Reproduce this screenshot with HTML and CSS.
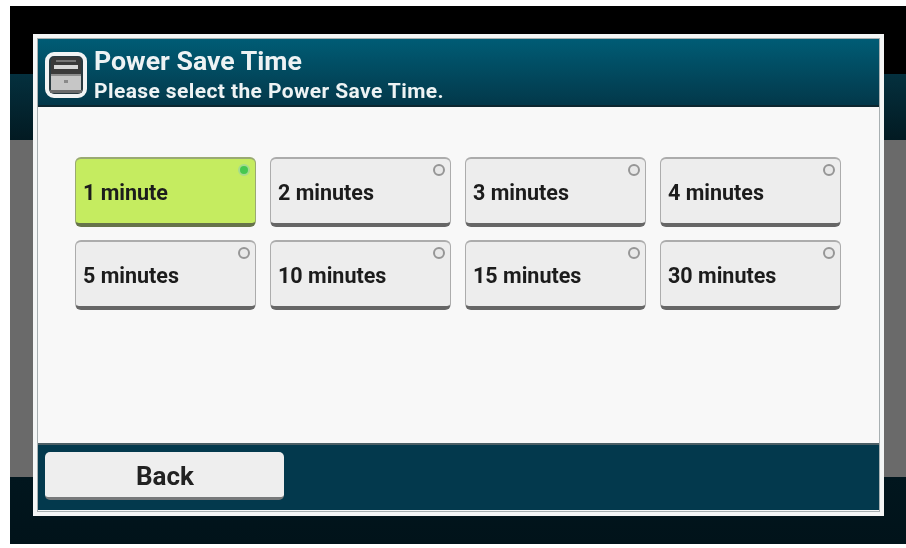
FILE: index.html
```html
<!DOCTYPE html>
<html lang="en">
<head>
    <meta charset="UTF-8">
    <title>Power Save Time</title>
    <link rel="stylesheet" href="styles.css">
</head>
<body>
    <div class="screen">
        <div class="dialog">
            <header class="titleBar">
                <svg class="printerIcon" viewBox="0 0 42 46" width="42" height="46">
                    <rect x="2" y="2" width="38" height="42" rx="7" fill="#2a3a40" stroke="#f2f4f4" stroke-width="4"/>
                    <path d="M6 9 Q6 5 10 5 H32 Q36 5 36 9 V22 H6 Z" fill="#3a3a3a"/>
                    <rect x="9" y="13" width="24" height="4" fill="#d8d8d8"/>
                    <rect x="11" y="8" width="20" height="2" fill="#777"/>
                    <rect x="6" y="22" width="30" height="16" fill="#c6c6c6"/>
                    <rect x="6" y="22" width="30" height="2" fill="#8c8c8c"/>
                    <rect x="19" y="28" width="4" height="3" fill="#8a8a8a"/>
                    <rect x="5" y="38" width="32" height="3" fill="#6b6b6b"/>
                </svg>
                <div class="titleText">
                    <h1>Power Save Time</h1>
                    <p>Please select the Power Save Time.</p>
                </div>
            </header>
            <main class="content">
                <div class="optionGrid">
                    <button class="option selected">1 minute</button>
                    <button class="option">2 minutes</button>
                    <button class="option">3 minutes</button>
                    <button class="option">4 minutes</button>
                    <button class="option">5 minutes</button>
                    <button class="option">10 minutes</button>
                    <button class="option">15 minutes</button>
                    <button class="option">30 minutes</button>
                </div>
            </main>
            <footer class="footerBar">
                <button class="backButton">Back</button>
            </footer>
        </div>
    </div>
</body>
</html>
```

FILE: styles.css
```css
html, body {
    margin: 0;
    padding: 0;
    background: #fff;
}
body {
    font-family: 'Roboto', 'Liberation Sans', sans-serif;
}
.screen {
    box-sizing: border-box;
    width: 896px;
    height: 538px;
    margin: 6px 0 0 10px;
    padding: 28px 0 0 23px;
    /* bands of the panel behind the dialog */
    background: linear-gradient(to bottom,
        #000 0, #000 68px,
        #04303e 68px, #021a22 134px,
        #6a6a6a 134px, #6a6a6a 471px,
        #01161e 471px, #01131a 538px);
    filter: blur(0.7px);
}
.dialog {
    box-sizing: border-box;
    width: 851px;
    height: 482px;
    border: solid #f4f6f6;
    border-width: 5px 5px 6px 5px;
    outline: 1px solid #a8b0b2;
    outline-offset: -5px;
    display: flex;
    flex-direction: column;
}
.titleBar {
    height: 68px;
    flex: none;
    box-sizing: border-box;
    padding: 0 0 0 7px;
    display: flex;
    align-items: center;
    gap: 7px;
    background: linear-gradient(to bottom, #005c75, #03384a);
    border-bottom: 2px solid #0d2730;
    color: #eef3f4;
}
.printerIcon {
    flex: none;
    margin-top: 5px;
}
.titleText {
    padding-top: 6px;
}
.titleText h1 {
    margin: 0;
    font-size: 26.7px;
    line-height: 29px;
    font-weight: 700;
}
.titleText p {
    margin: 3px 0 0;
    font-size: 21px;
    line-height: 24px;
    font-weight: 700;
    letter-spacing: 0.4px;
}
.content {
    flex: 1;
    background: #f8f8f8;
    padding: 50px 0 0 37px;
}
.optionGrid {
    display: grid;
    grid-template-columns: repeat(4, 181px);
    grid-auto-rows: 70px;
    column-gap: 14px;
    row-gap: 13px;
}
.option {
    position: relative;
    box-sizing: border-box;
    margin: 0;
    padding: 2px 0 0 7px;
    text-align: left;
    font-family: inherit;
    font-size: 21.5px;
    font-weight: 700;
    color: #1c1c1c;
    background: #ededed;
    border: solid #acacac;
    border-width: 2px 1px 4px;
    border-bottom-color: #666;
    border-radius: 6px;
}
.option::after {
    content: '';
    position: absolute;
    top: 5px;
    right: 5px;
    width: 8px;
    height: 8px;
    border: 2px solid #969696;
    border-radius: 50%;
    background: #e8e8e8;
}
.option.selected {
    background: #c5ec60;
    border-color: #9aaa72 #9aaa72 #66734a;
}
.option.selected::after {
    border-color: #a5dc8c;
    background: #45c850;
}
.footerBar {
    height: 67px;
    flex: none;
    box-sizing: border-box;
    padding: 7px 0 0 7px;
    background: #03394d;
    border-top: 2px solid #4c5f66;
}
.backButton {
    box-sizing: border-box;
    width: 239px;
    height: 48px;
    margin: 0;
    padding: 2px 0 0 1px;
    font-family: inherit;
    font-size: 26px;
    font-weight: 700;
    color: #222;
    background: #eeeeee;
    border: none;
    border-bottom: 3px solid #77797a;
    border-radius: 5px;
}
```
